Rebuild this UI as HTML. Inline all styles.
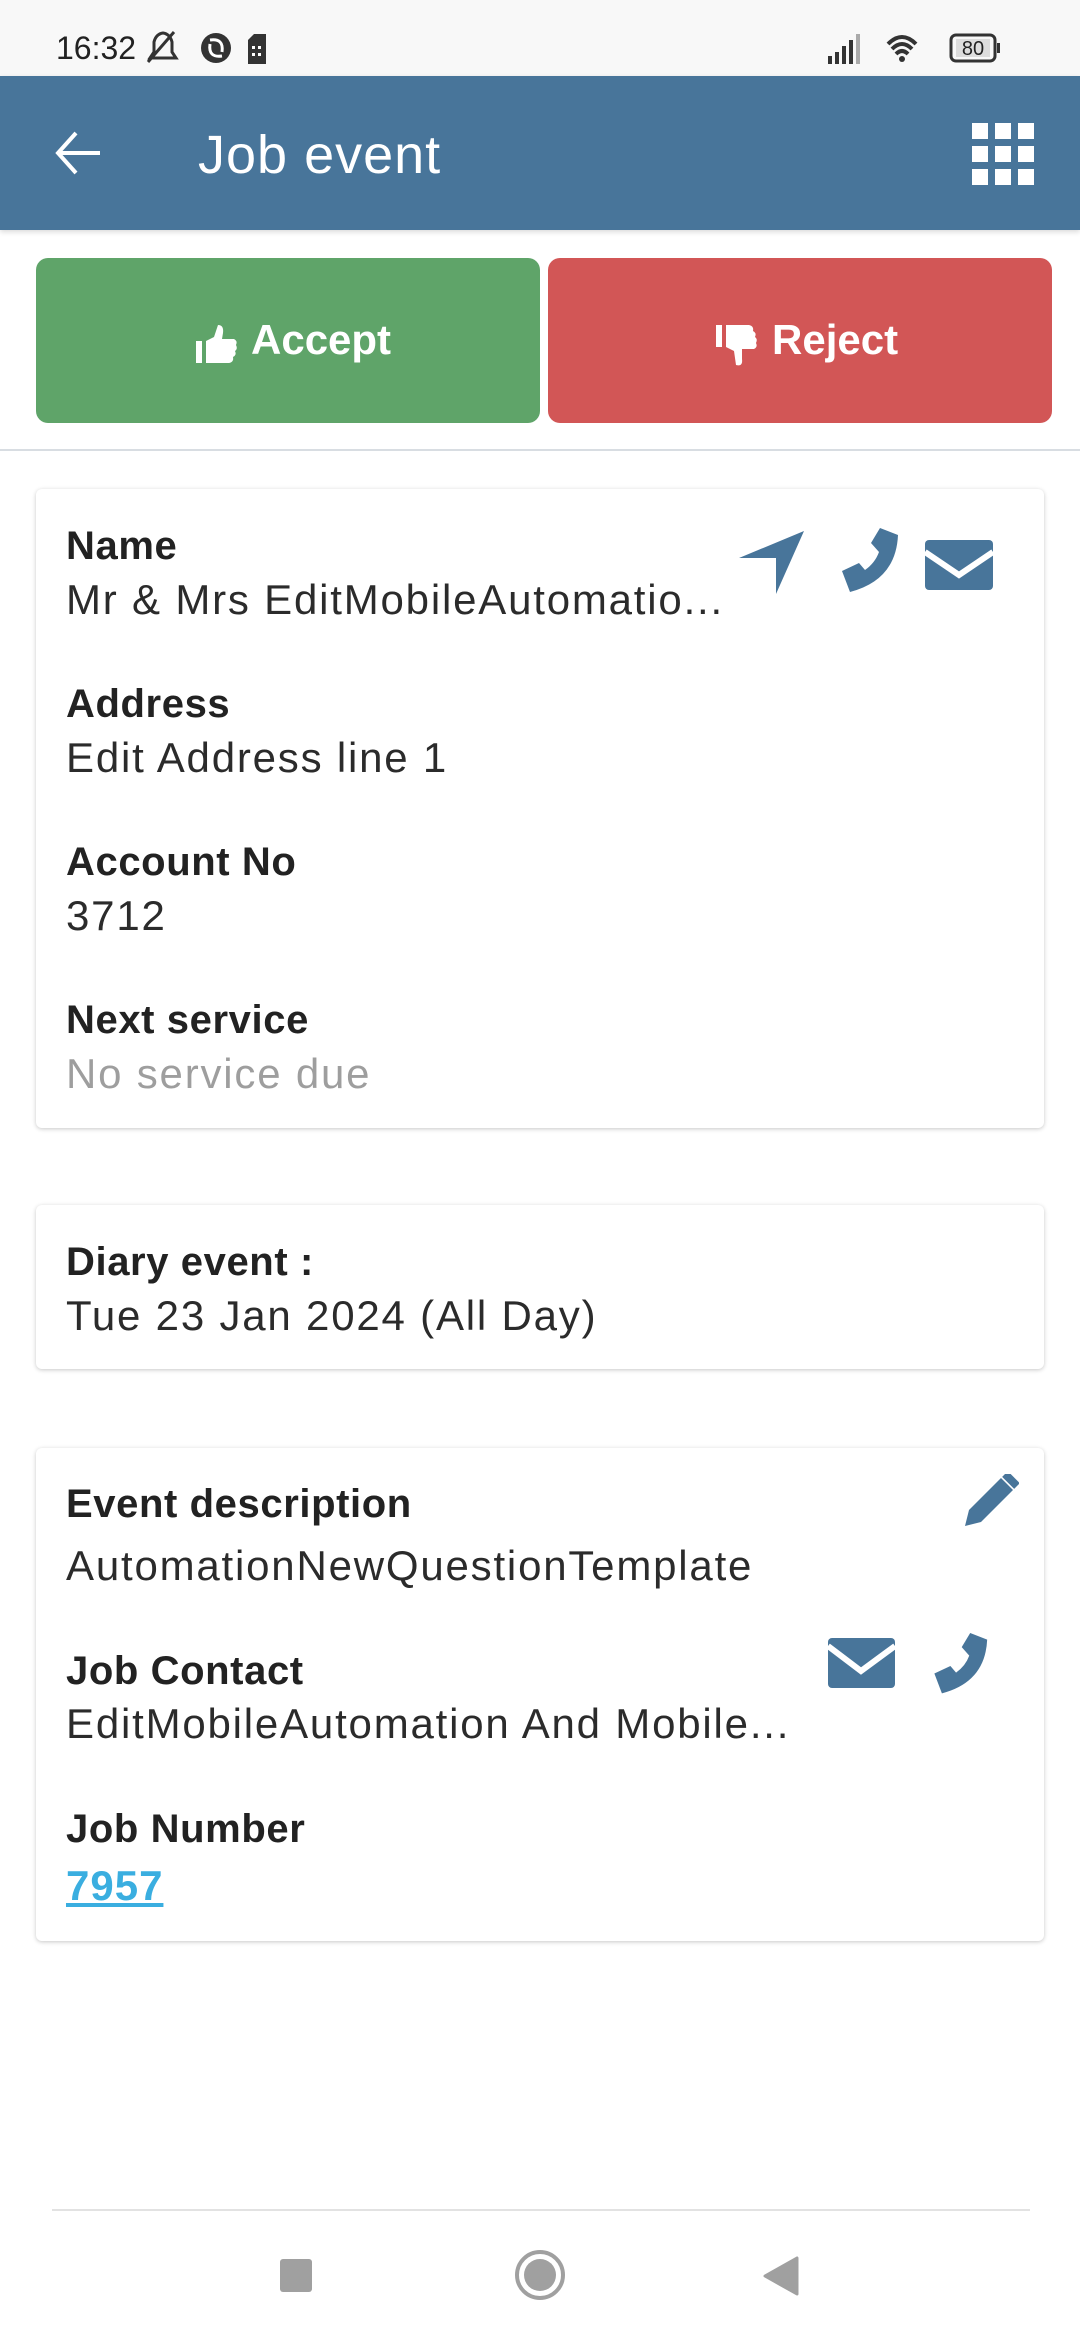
<!DOCTYPE html>
<html><head><meta charset="utf-8"><style>
*{margin:0;padding:0;box-sizing:border-box}
body{width:1080px;height:2340px;background:#fff;position:relative;overflow:hidden;font-family:"Liberation Sans",sans-serif}
.abs{position:absolute;white-space:nowrap}
.card{position:absolute;left:36px;width:1008px;background:#fff;border-radius:6px;box-shadow:0 1px 4px rgba(0,0,0,.22)}
.lab{position:absolute;left:66px;font-size:40px;font-weight:bold;color:#222;line-height:50px;white-space:nowrap;letter-spacing:0.6px}
.val{position:absolute;left:66px;font-size:42px;color:#2b2b2b;line-height:50px;white-space:nowrap;letter-spacing:1.8px}
</style></head><body>
<div class="abs" style="left:0;top:0;width:1080px;height:76px;background:#f8f8f8"></div>
<div class="abs" style="left:56px;top:28px;font-size:32px;color:#222;line-height:40px">16:32</div>
<svg class="abs" style="left:144px;top:28px" width="130" height="40" viewBox="0 0 130 40">
<path d="M6 30 L10 24 L10 14 Q12 6 19 5 Q26 6 28 14 L28 24 L32 30 Z" fill="none" stroke="#333" stroke-width="3"/><line x1="4" y1="34" x2="30" y2="4" stroke="#333" stroke-width="3"/>
<circle cx="72" cy="20" r="15" fill="#333"/><path d="M66 12 Q80 10 78 24 M78 28 Q64 30 66 16" stroke="#fff" stroke-width="3" fill="none"/>
<path d="M110 6 L122 6 L122 36 L104 36 L104 12 Z" fill="#333"/><rect x="108" y="18" width="3" height="3" fill="#fff"/><rect x="114" y="18" width="3" height="3" fill="#fff"/><rect x="108" y="25" width="3" height="3" fill="#fff"/><rect x="114" y="25" width="3" height="3" fill="#fff"/>
</svg>
<svg class="abs" style="left:826px;top:28px" width="200" height="40" viewBox="0 0 200 40">
<rect x="2" y="28" width="4" height="8" fill="#333"/><rect x="9" y="24" width="4" height="12" fill="#333"/><rect x="16" y="18" width="4" height="18" fill="#333"/><rect x="23" y="12" width="4" height="24" fill="#333"/><rect x="30" y="6" width="4" height="30" fill="#aaa"/>
<path d="M62 16 Q76 2 90 16 M66 21 Q76 11 86 21 M70 26 Q76 20 82 26" stroke="#333" stroke-width="4" fill="none"/><circle cx="76" cy="31" r="3" fill="#333"/>
<rect x="125" y="7" width="44" height="26" rx="5" fill="none" stroke="#333" stroke-width="3"/><rect x="130" y="11" width="34" height="18" fill="#ddd"/><rect x="171" y="15" width="3" height="10" fill="#333"/>
<text x="147" y="27" font-size="20" text-anchor="middle" fill="#222" font-family="Liberation Sans">80</text>
</svg>
<div class="abs" style="left:0;top:76px;width:1080px;height:154px;background:#48759a;box-shadow:0 2px 5px rgba(0,0,0,.15)"></div>
<svg class="abs" style="left:54px;top:130px" width="48" height="46" viewBox="0 0 48 46"><path d="M22 3 L4 23 L22 43 M4 23 L46 23" stroke="#fff" stroke-width="4" fill="none"/></svg>
<div class="abs" style="left:198px;top:123px;font-size:54px;color:#fff;line-height:64px;letter-spacing:1px">Job event</div>
<svg class="abs" style="left:972px;top:123px" width="62" height="62" viewBox="0 0 62 62">
<g fill="#fff"><rect x="0" y="0" width="16" height="16"/><rect x="23" y="0" width="16" height="16"/><rect x="46" y="0" width="16" height="16"/><rect x="0" y="23" width="16" height="16"/><rect x="23" y="23" width="16" height="16"/><rect x="46" y="23" width="16" height="16"/><rect x="0" y="46" width="16" height="16"/><rect x="23" y="46" width="16" height="16"/><rect x="46" y="46" width="16" height="16"/></g></svg>
<div class="abs" style="left:36px;top:258px;width:504px;height:165px;background:#5fa469;border-radius:12px"></div>
<div class="abs" style="left:548px;top:258px;width:504px;height:165px;background:#d25656;border-radius:12px"></div>
<svg class="abs" style="left:196px;top:323px" width="42" height="42" viewBox="0 0 42 42"><rect x="0" y="18" width="6" height="22" fill="#fff"/><path d="M10 18 L18 14 L22 2 Q28 2 27 10 L26 16 L38 16 Q42 18 40 22 Q42 26 39 28 Q41 32 37 34 Q38 39 33 40 L10 40 Z" fill="#fff"/></svg>
<div class="abs" style="left:251px;top:314px;font-size:42px;font-weight:bold;color:#fff;line-height:52px">Accept</div>
<svg class="abs" style="left:716px;top:323px" width="42" height="45" viewBox="0 0 42 45"><rect x="0" y="2" width="6" height="22" fill="#fff"/><path d="M10 24 L18 28 L20 42 Q27 44 26 36 L26 26 L38 26 Q42 24 40 20 Q42 16 39 14 Q41 10 37 8 Q38 3 33 2 L10 2 Z" fill="#fff"/></svg>
<div class="abs" style="left:772px;top:314px;font-size:42px;font-weight:bold;color:#fff;line-height:52px">Reject</div>
<div class="abs" style="left:0;top:449px;width:1080px;height:2px;background:#d8dde2"></div>

<div class="card" style="top:489px;height:639px"></div>
<div class="lab" style="top:521px">Name</div>
<div class="val" style="top:575px">Mr &amp; Mrs EditMobileAutomatio...</div>
<div class="lab" style="top:679px">Address</div>
<div class="val" style="top:733px">Edit Address line 1</div>
<div class="lab" style="top:837px">Account No</div>
<div class="val" style="top:891px">3712</div>
<div class="lab" style="top:995px">Next service</div>
<div class="val" style="top:1049px;color:#9e9e9e">No service due</div>
<svg class="abs" style="left:736px;top:528px" width="70" height="70" viewBox="0 0 70 70"><path d="M3 30 L68 3 L40 66 L40 30 Z" fill="#48759a"/></svg>
<svg class="abs" style="left:830px;top:528px" width="72" height="70" viewBox="0 0 72 70"><path d="M50 0 L68 7 Q66 52 20 64 L12 43 L29 35 L35 42 Q45 35 49 24 L41 15 Z" fill="#48759a"/></svg>
<svg class="abs" style="left:925px;top:540px" width="70" height="52" viewBox="0 0 70 52"><rect x="0" y="0" width="68" height="50" rx="4" fill="#48759a"/><path d="M0 12 L34 35 L68 12" stroke="#fff" stroke-width="6" fill="none"/></svg>

<div class="card" style="top:1205px;height:164px"></div>
<div class="lab" style="top:1237px">Diary event :</div>
<div class="val" style="top:1291px">Tue 23 Jan 2024 (All Day)</div>

<div class="card" style="top:1448px;height:493px"></div>
<div class="lab" style="top:1479px">Event description</div>
<div class="val" style="top:1541px">AutomationNewQuestionTemplate</div>
<div class="lab" style="top:1646px">Job Contact</div>
<div class="val" style="top:1699px">EditMobileAutomation And Mobile...</div>
<div class="lab" style="top:1804px">Job Number</div>
<div class="val" style="top:1861px;color:#3aaee0;font-weight:bold;text-decoration:underline;letter-spacing:1px">7957</div>
<svg class="abs" style="left:963px;top:1474px" width="56" height="54" viewBox="0 0 56 54"><path d="M2 52 L6 36 L38 4 L50 16 L18 48 Z" fill="#48759a"/><path d="M42 0 L54 12" stroke="#48759a" stroke-width="8"/></svg>
<svg class="abs" style="left:828px;top:1638px" width="68" height="52" viewBox="0 0 68 52"><rect x="0" y="0" width="67" height="50" rx="4" fill="#48759a"/><path d="M0 8 L33 33 L67 8" stroke="#fff" stroke-width="6" fill="none"/></svg>
<svg class="abs" style="left:922px;top:1633px" width="70" height="66" viewBox="0 0 72 70"><path d="M50 0 L68 7 Q66 52 20 64 L12 43 L29 35 L35 42 Q45 35 49 24 L41 15 Z" fill="#48759a"/></svg>

<div class="abs" style="left:52px;top:2209px;width:978px;height:2px;background:#e2e2e2"></div>
<div class="abs" style="left:280px;top:2259px;width:32px;height:33px;background:#a0a0a0;border-radius:3px"></div>
<div class="abs" style="left:515px;top:2250px;width:50px;height:50px;border:4px solid #a0a0a0;border-radius:50%"></div>
<div class="abs" style="left:524px;top:2259px;width:32px;height:32px;background:#a0a0a0;border-radius:50%"></div>
<svg class="abs" style="left:762px;top:2256px" width="38" height="40" viewBox="0 0 38 40"><path d="M35 2 L35 38 L3 20 Z" fill="#a0a0a0" stroke="#a0a0a0" stroke-width="3" stroke-linejoin="round"/></svg>
</body></html>
